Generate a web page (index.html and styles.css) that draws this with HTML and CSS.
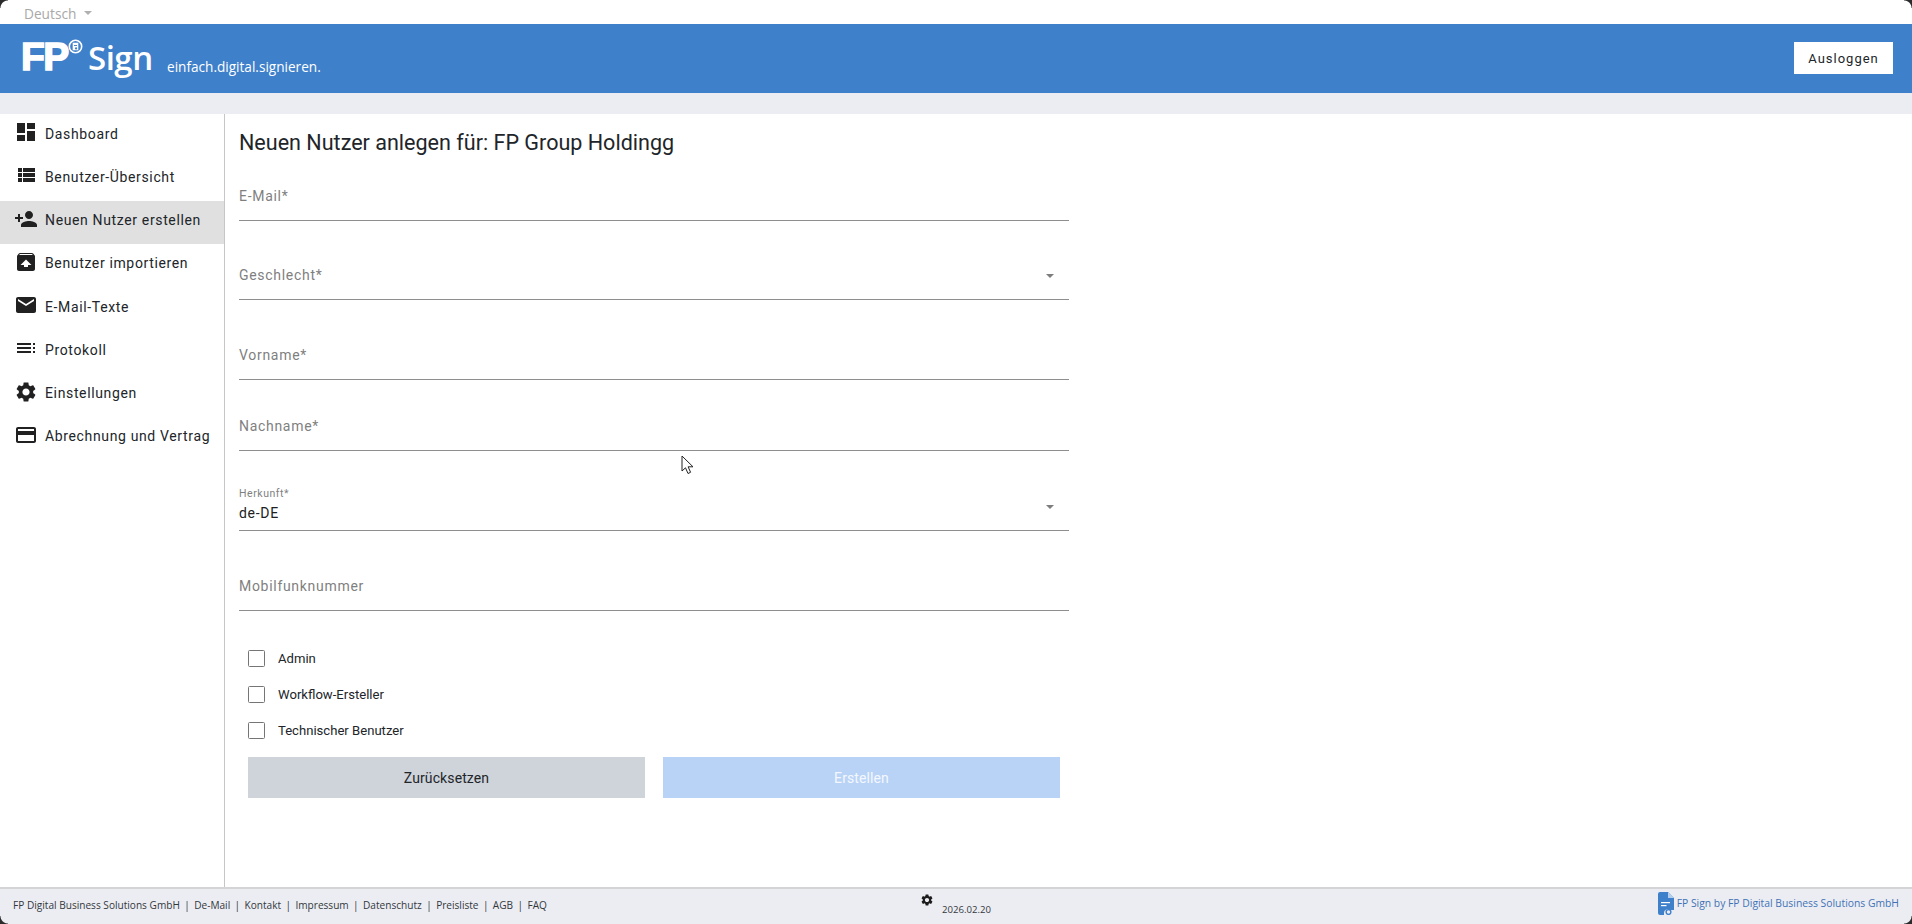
FILE: index.html
```html
<!DOCTYPE html>
<html lang="de">
<head>
<meta charset="utf-8">
<title>FP Sign</title>
<link rel="stylesheet" href="styles.css">
</head>
<body>
<div class="app">
  <div class="langbar"><span class="lang">Deutsch</span><span class="caret caret-lang"></span></div>
  <header class="header">
    <div class="logo">
      <span class="logo-fp">FP</span>
      <svg class="logo-reg" viewBox="0 0 16 16"><circle cx="8" cy="8" r="6.6" fill="none" stroke="#fff" stroke-width="1.7"/><rect x="5" y="4" width="6" height="8" fill="#fff"/><rect x="6.4" y="6.4" width="3.2" height="1" fill="#3f80cb"/><circle cx="8.6" cy="10" r="1.2" fill="#3f80cb"/></svg>
      <span class="logo-sign">Sign</span>
      <span class="tagline">einfach.digital.signieren.</span>
    </div>
    <button class="logout">Ausloggen</button>
  </header>
  <div class="band"></div>
  <div class="main">
    <nav class="sidebar">
      <a class="nav-item"><svg class="nav-icon" viewBox="0 0 24 24"><path d="M3 13h8V3H3v10zm0 8h8v-6H3v6zm10 0h8V11h-8v10zm0-18v6h8V3h-8z"/></svg><span>Dashboard</span></a>
      <a class="nav-item"><svg class="nav-icon" viewBox="0 0 24 24"><path d="M4 14h4v-4H4v4zm0 5h4v-4H4v4zM4 9h4V5H4v4zm5 5h12v-4H9v4zm0 5h12v-4H9v4zM9 5v4h12V5H9z"/></svg><span>Benutzer-Übersicht</span></a>
      <a class="nav-item active"><svg class="nav-icon" viewBox="0 0 24 24"><path d="M15 12c2.21 0 4-1.79 4-4s-1.79-4-4-4-4 1.79-4 4 1.79 4 4 4zm-9-2V7H4v3H1v2h3v3h2v-3h3v-2H6zm9 4c-2.67 0-8 1.34-8 4v2h16v-2c0-2.66-5.33-4-8-4z"/></svg><span>Neuen Nutzer erstellen</span></a>
      <a class="nav-item"><svg class="nav-icon" viewBox="0 0 24 24"><path d="M20.55 5.22l-1.39-1.68C18.88 3.21 18.47 3 18 3H6c-.47 0-.88.21-1.15.55L3.46 5.22C3.17 5.57 3 6.01 3 6.5V19c0 1.1.89 2 2 2h14c1.1 0 2-.9 2-2V6.5c0-.49-.17-.93-.45-1.28zM12 9.5l5.5 5.5H14v2h-4v-2H6.5L12 9.5zM5.12 5l.82-1h12l.93 1H5.12z"/></svg><span>Benutzer importieren</span></a>
      <a class="nav-item"><svg class="nav-icon" viewBox="0 0 24 24"><path d="M20 4H4c-1.1 0-1.99.9-1.99 2L2 18c0 1.1.9 2 2 2h16c1.1 0 2-.9 2-2V6c0-1.1-.9-2-2-2zm0 4l-8 5-8-5V6l8 5 8-5v2z"/></svg><span>E-Mail-Texte</span></a>
      <a class="nav-item"><svg class="nav-icon" viewBox="0 0 24 24"><path d="M3 9h14V7H3v2zm0 4h14v-2H3v2zm0 4h14v-2H3v2zm16 0h2v-2h-2v2zm0-10v2h2V7h-2zm0 6h2v-2h-2v2z"/></svg><span>Protokoll</span></a>
      <a class="nav-item"><svg class="nav-icon" viewBox="0 0 24 24"><path d="M19.14 12.94c.04-.3.06-.61.06-.94 0-.32-.02-.64-.07-.94l2.03-1.58c.18-.14.23-.41.12-.61l-1.92-3.32c-.12-.22-.37-.29-.59-.22l-2.39.96c-.5-.38-1.03-.7-1.62-.94l-.36-2.54c-.04-.24-.24-.41-.48-.41h-3.84c-.24 0-.43.17-.47.41l-.36 2.54c-.59.24-1.13.57-1.62.94l-2.39-.96c-.22-.08-.47 0-.59.22L2.74 8.87c-.12.21-.08.47.12.61l2.03 1.58c-.05.3-.09.63-.09.94s.02.64.07.94l-2.03 1.58c-.18.14-.23.41-.12.61l1.92 3.32c.12.22.37.29.59.22l2.39-.96c.5.38 1.03.7 1.62.94l.36 2.54c.05.24.24.41.48.41h3.84c.24 0 .44-.17.47-.41l.36-2.54c.59-.24 1.13-.56 1.62-.94l2.39.96c.22.08.47 0 .59-.22l1.92-3.32c.12-.22.07-.47-.12-.61l-2.01-1.58zM12 15.6c-1.98 0-3.6-1.62-3.6-3.6s1.62-3.6 3.6-3.6 3.6 1.62 3.6 3.6-1.62 3.6-3.6 3.6z"/></svg><span>Einstellungen</span></a>
      <a class="nav-item"><svg class="nav-icon" viewBox="0 0 24 24"><path d="M20 4H4c-1.11 0-1.99.89-1.99 2L2 18c0 1.11.89 2 2 2h16c1.11 0 2-.89 2-2V6c0-1.11-.89-2-2-2zm0 14H4v-6h16v6zm0-10H4V6h16v2z"/></svg><span>Abrechnung und Vertrag</span></a>
    </nav>
    <main class="content">
      <h1 class="title">Neuen Nutzer anlegen für: FP Group Holdingg</h1>
      <form class="form">
        <div class="field field-first"><span class="label">E-Mail*</span></div>
        <div class="field field-second"><span class="label">Geschlecht*</span><span class="caret caret-select"></span></div>
        <div class="field"><span class="label">Vorname*</span></div>
        <div class="field field-tight"><span class="label">Nachname*</span></div>
        <div class="field field-filled"><span class="label-small">Herkunft*</span><span class="value">de-DE</span><span class="caret caret-select"></span></div>
        <div class="field"><span class="label">Mobilfunknummer</span></div>
        <div class="checks">
          <label class="check"><span class="box"></span><span>Admin</span></label>
          <label class="check"><span class="box"></span><span>Workflow-Ersteller</span></label>
          <label class="check"><span class="box"></span><span>Technischer Benutzer</span></label>
        </div>
        <div class="actions">
          <button type="button" class="btn btn-reset">Zurücksetzen</button>
          <button type="button" class="btn btn-create">Erstellen</button>
        </div>
      </form>
    </main>
  </div>
  <footer class="footer">
    <div class="foot-links">
      <span>FP Digital Business Solutions GmbH</span><i>|</i><span>De-Mail</span><i>|</i><span>Kontakt</span><i>|</i><span>Impressum</span><i>|</i><span>Datenschutz</span><i>|</i><span>Preisliste</span><i>|</i><span>AGB</span><i>|</i><span>FAQ</span>
    </div>
    <div class="foot-center">
      <svg class="foot-gear" viewBox="0 0 24 24"><path d="M19.14 12.94c.04-.3.06-.61.06-.94 0-.32-.02-.64-.07-.94l2.03-1.58c.18-.14.23-.41.12-.61l-1.92-3.32c-.12-.22-.37-.29-.59-.22l-2.39.96c-.5-.38-1.03-.7-1.62-.94l-.36-2.54c-.04-.24-.24-.41-.48-.41h-3.84c-.24 0-.43.17-.47.41l-.36 2.54c-.59.24-1.13.57-1.62.94l-2.39-.96c-.22-.08-.47 0-.59.22L2.74 8.87c-.12.21-.08.47.12.61l2.03 1.58c-.05.3-.09.63-.09.94s.02.64.07.94l-2.03 1.58c-.18.14-.23.41-.12.61l1.92 3.32c.12.22.37.29.59.22l2.39-.96c.5.38 1.03.7 1.62.94l.36 2.54c.05.24.24.41.48.41h3.84c.24 0 .44-.17.47-.41l.36-2.54c.59-.24 1.13-.56 1.62-.94l2.39.96c.22.08.47 0 .59-.22l1.92-3.32c.12-.22.07-.47-.12-.61l-2.01-1.58zM12 15.6c-1.98 0-3.6-1.62-3.6-3.6s1.62-3.6 3.6-3.6 3.6 1.62 3.6 3.6-1.62 3.6-3.6 3.6z"/></svg>
      <span class="foot-date">2026.02.20</span>
    </div>
    <div class="foot-brand">
      <svg class="foot-doc" viewBox="0 0 16 23"><path d="M0 2a2 2 0 0 1 2-2h8l6 6v12h-4.500a3.500 3.500 0 0 0-5.500 3v2H2a2 2 0 0 1-2-2z" fill="#3f80cb"/><path d="M10 0v6h6z" fill="#b5cfee"/><rect x="3" y="10" width="9" height="1.200" fill="#fff"/><rect x="3" y="13" width="5.500" height="1.200" fill="#fff"/><circle cx="10.500" cy="20" r="2.400" fill="none" stroke="#3f80cb" stroke-width="1.400"/></svg>
      <span class="foot-brand-text">FP Sign by FP Digital Business Solutions GmbH</span>
    </div>
  </footer>
  <svg class="cursor" viewBox="0 0 13 20"><path d="M1 1v15l3.500-3.200 2.500 5.700 2.600-1.200-2.500-5.500H12z" fill="#fff" stroke="#222" stroke-width="1"/></svg>
  <span class="corner corner-tl"></span>
  <span class="corner corner-tr"></span>
  <span class="corner corner-bl"></span>
  <span class="corner corner-br"></span>
</div>
</body>
</html>
```
FILE: styles.css
```css
* { box-sizing: border-box; }
html, body { margin: 0; padding: 0; height: 100%; overflow: hidden; background: #fff; }
body { font-family: Roboto, "Liberation Sans", sans-serif; color: #212529; }
.app { position: relative; width: 1912px; height: 924px; display: flex; flex-direction: column; overflow: hidden; }

.langbar { height: 24px; flex: none; display: flex; align-items: center; padding: 2px 0 0 24px; }
.lang { font-family: "Open Sans", sans-serif; font-size: 13.700px; color: #a8a8a8; }
.caret { display: inline-block; width: 0; height: 0; border-left: 4.500px solid transparent; border-right: 4.500px solid transparent; border-top: 4.500px solid #7d7d7d; }
.caret-lang { margin-left: 8px; border-top-color: #b0b0b0; }

.header { height: 69px; flex: none; background: #3f80cb; display: flex; align-items: flex-start; justify-content: space-between; padding: 18px 19px 0 21px; }
.logo { display: flex; align-items: flex-start; color: #fff; }
.logo-fp { font-family: "Liberation Sans", sans-serif; font-weight: 700; font-size: 39px; line-height: 36px; letter-spacing: -1.500px; width: 47px; margin-top: -3.500px; -webkit-text-stroke: 1.500px #fff; }
.logo-reg { width: 15px; height: 15px; margin: -3px 0 0 0; flex: none; }
.logo-sign { font-family: "Open Sans", sans-serif; font-weight: 600; font-size: 33px; letter-spacing: -.5px; line-height: 40px; width: 64px; margin: -4.500px 0 0 5px; }
.tagline { font-family: "Open Sans", sans-serif; font-size: 13.600px; line-height: 20px; margin: 15px 0 0 15px; }
.logout { width: 99px; height: 32px; border: 0; background: #fff; color: #212529; font-family: Roboto, sans-serif; font-size: 13px; letter-spacing: 1px; padding: 0; }

.band { height: 21px; flex: none; background: #ecedf3; }
.main { flex: 1; display: flex; min-height: 0; }

.sidebar { width: 225px; flex: none; border-right: 1px solid #c6c6c6; display: flex; flex-direction: column; }
.nav-item { height: 43.250px; flex: none; display: flex; align-items: center; padding: 0 0 4px 14px; gap: 7px; font-size: 14px; letter-spacing: .64px; color: #212529; }
.nav-item.active { background: #e0e0e0; }
.nav-icon { width: 24px; height: 24px; fill: #212121; flex: none; margin-top: -3px; }

.content { flex: 1; padding: 0 0 0 14px; }
.title { margin: 0; font-size: 21.550px; font-weight: 400; line-height: 28px; padding-top: 15px; color: #212529; }
.form { width: 830px; }
.field { position: relative; height: 80px; border-bottom: 1px solid #8e8e8e; padding-top: 45px; }
.field-first { height: 64px; padding-top: 29px; }
.field-second { height: 79px; padding-top: 44px; }
.field-tight { height: 71px; padding-top: 36px; }
.field-filled { padding-top: 37px; }
.label { display: block; font-size: 14px; line-height: 20px; letter-spacing: .7px; color: #7f7f7f; }
.label-small { display: block; font-size: 10.500px; line-height: 12px; letter-spacing: .55px; color: #7f7f7f; }
.value { display: block; font-size: 14px; line-height: 20px; letter-spacing: .7px; color: #212121; margin-top: 3px; }
.caret-select { position: absolute; right: 15px; bottom: 21px; }

.checks { display: flex; flex-direction: column; gap: 19.500px; padding: 39px 0 0 9px; }
.check { display: flex; align-items: center; height: 16.500px; font-size: 13.100px; color: #212529; }
.box { width: 17px; height: 17px; border: 1.500px solid #757575; border-radius: 1.500px; margin-right: 13px; flex: none; background: #fff; }
.actions { display: flex; gap: 18px; padding: 18.500px 8px 0 9px; }
.btn { width: 397px; height: 41px; border: 0; font-family: Roboto, sans-serif; font-size: 14px; letter-spacing: .1px; padding: 0; }
.btn-reset { background: #cfd3da; color: #212529; }
.btn-create { background: #b9d3f6; color: #f4f8fe; }

.footer { height: 37px; flex: none; background: #ecedf3; border-top: 2px solid #d4d4d6; display: flex; position: relative; font-family: "Open Sans", sans-serif; font-size: 10.100px; color: #33383d; }
.foot-links { display: flex; align-items: center; padding: 0 0 2px 13px; height: 34px; }
.foot-links i { font-style: normal; margin: 0 4.400px; }
.foot-center { position: absolute; left: 920px; top: 4px; display: flex; align-items: flex-start; }
.foot-gear { width: 14px; height: 14px; fill: #1c1c1c; flex: none; }
.foot-date { margin: 10px 0 0 8px; line-height: 14px; font-size: 9.600px; }
.foot-brand { margin-left: auto; display: flex; align-items: flex-start; padding: 3px 13px 0 0; color: #3f72b5; }
.foot-brand-text { line-height: 20px; margin-top: 1px; font-size: 10.350px; }
.foot-doc { width: 16px; height: 23px; margin-right: 3px; flex: none; }

.cursor { position: absolute; left: 681px; top: 455px; width: 13px; height: 20px; }
.corner { position: absolute; width: 8px; height: 8px; background: radial-gradient(circle at var(--c), transparent 7px, #2b2b2b 8px); }
.corner-tl { left: 0; top: 0; --c: 100% 100%; }
.corner-tr { right: 0; top: 0; --c: 0 100%; }
.corner-bl { left: 0; bottom: 0; --c: 100% 0; }
.corner-br { right: 0; bottom: 0; --c: 0 0; }
```
